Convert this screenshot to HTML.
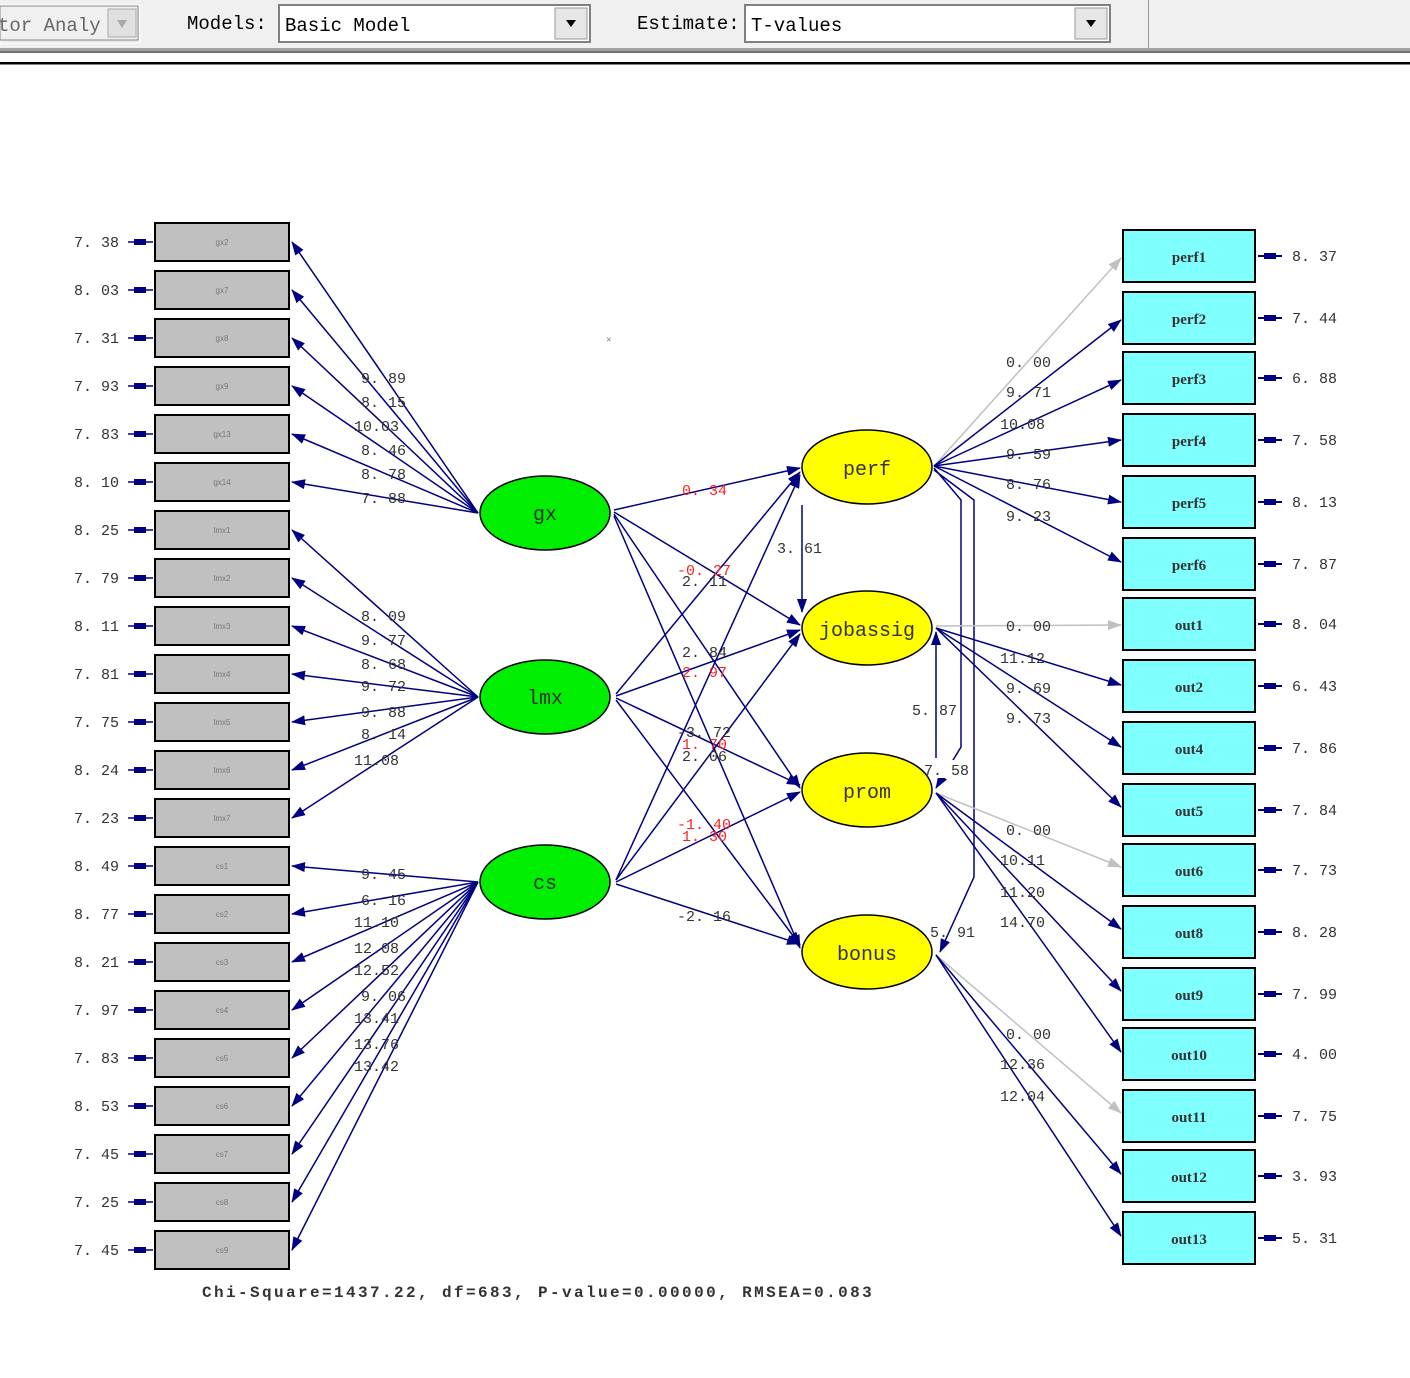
<!DOCTYPE html>
<html><head><meta charset="utf-8"><style>
html,body{margin:0;padding:0;background:#fff;width:1410px;height:1378px;overflow:hidden}
svg{display:block}
.n{font-family:"Liberation Mono",monospace;font-size:15px;fill:#333}
.r{fill:#ff2020}
.bx{fill:#c0c0c0;stroke:#000;stroke-width:2}
.cb{fill:#80ffff;stroke:#000;stroke-width:2}
.bl{font-family:"Liberation Sans",sans-serif;font-size:8px;fill:#777;text-anchor:middle}
.cl{font-family:"Liberation Serif",serif;font-size:15px;font-weight:bold;fill:#333;text-anchor:middle}
.ln{stroke:#000080;stroke-width:1.5;fill:none}
.gl{stroke:#c0c0c0;stroke-width:1.5;fill:none}
.tb{font-family:"Liberation Mono",monospace;font-size:19px;fill:#000}
</style></head><body>
<svg width="1410" height="1378" xmlns="http://www.w3.org/2000/svg">
<defs>
<marker id="a" markerWidth="14" markerHeight="10" refX="13" refY="5" orient="auto" markerUnits="userSpaceOnUse"><path d="M0,0 L14,5 L0,10 z" fill="#000080"/></marker>
<marker id="g" markerWidth="14" markerHeight="10" refX="13" refY="5" orient="auto" markerUnits="userSpaceOnUse"><path d="M0,0 L14,5 L0,10 z" fill="#c0c0c0"/></marker>
</defs>
<rect x="0" y="0" width="1410" height="48" fill="#f0f0f0"/>
<rect x="0" y="48" width="1410" height="3" fill="#a0a0a0"/>
<rect x="0" y="51" width="1410" height="2" fill="#707070"/>
<rect x="0" y="62" width="1410" height="2.5" fill="#000"/>
<line x1="1148.5" y1="0" x2="1148.5" y2="48" stroke="#999"/>
<rect x="0" y="5" width="140" height="38" fill="#e8e8e8" stroke="#fff"/>
<rect x="0" y="6" width="138" height="34" fill="#f0f0f0" stroke="#888"/>
<text x="-2" y="31" class="tb" style="fill:#666">tor Analy</text>
<rect x="108" y="9" width="28" height="28" fill="#e0e0e0" stroke="#aaa"/>
<path d="M117,20 L127,20 L122,28 z" fill="#aaa"/>
<text x="187" y="29" class="tb">Models:</text>
<rect x="279" y="5" width="311" height="37" fill="#fff" stroke="#808080" stroke-width="2"/>
<text x="285" y="31" class="tb">Basic Model</text>
<rect x="555" y="8" width="32" height="31" fill="#e6e6e6" stroke="#999"/>
<path d="M566,20 L576,20 L571,27 z" fill="#000"/>
<text x="637" y="29" class="tb">Estimate:</text>
<rect x="745" y="5" width="365" height="37" fill="#fff" stroke="#808080" stroke-width="2"/>
<text x="751" y="31" class="tb">T-values</text>
<rect x="1075" y="8" width="32" height="31" fill="#e6e6e6" stroke="#999"/>
<path d="M1086,20 L1096,20 L1091,27 z" fill="#000"/>
<text x="606" y="343" font-size="10" fill="#555">×</text>

<g class="ln">
<line x1="478" y1="513" x2="292" y2="242" marker-end="url(#a)"/>
<line x1="478" y1="513" x2="292" y2="290" marker-end="url(#a)"/>
<line x1="478" y1="513" x2="292" y2="338" marker-end="url(#a)"/>
<line x1="478" y1="513" x2="292" y2="386" marker-end="url(#a)"/>
<line x1="478" y1="513" x2="292" y2="434" marker-end="url(#a)"/>
<line x1="478" y1="513" x2="292" y2="482" marker-end="url(#a)"/>
<line x1="478" y1="697" x2="292" y2="530" marker-end="url(#a)"/>
<line x1="478" y1="697" x2="292" y2="578" marker-end="url(#a)"/>
<line x1="478" y1="697" x2="292" y2="626" marker-end="url(#a)"/>
<line x1="478" y1="697" x2="292" y2="674" marker-end="url(#a)"/>
<line x1="478" y1="697" x2="292" y2="722" marker-end="url(#a)"/>
<line x1="478" y1="697" x2="292" y2="770" marker-end="url(#a)"/>
<line x1="478" y1="697" x2="292" y2="818" marker-end="url(#a)"/>
<line x1="478" y1="882" x2="292" y2="866" marker-end="url(#a)"/>
<line x1="478" y1="882" x2="292" y2="914" marker-end="url(#a)"/>
<line x1="478" y1="882" x2="292" y2="962" marker-end="url(#a)"/>
<line x1="478" y1="882" x2="292" y2="1010" marker-end="url(#a)"/>
<line x1="478" y1="882" x2="292" y2="1058" marker-end="url(#a)"/>
<line x1="478" y1="882" x2="292" y2="1106" marker-end="url(#a)"/>
<line x1="478" y1="882" x2="292" y2="1154" marker-end="url(#a)"/>
<line x1="478" y1="882" x2="292" y2="1202" marker-end="url(#a)"/>
<line x1="478" y1="882" x2="292" y2="1250" marker-end="url(#a)"/>
</g>
<g class="ln">
<line x1="128" y1="242" x2="153" y2="242"/><line x1="128" y1="290" x2="153" y2="290"/><line x1="128" y1="338" x2="153" y2="338"/><line x1="128" y1="386" x2="153" y2="386"/><line x1="128" y1="434" x2="153" y2="434"/><line x1="128" y1="482" x2="153" y2="482"/><line x1="128" y1="530" x2="153" y2="530"/><line x1="128" y1="578" x2="153" y2="578"/><line x1="128" y1="626" x2="153" y2="626"/><line x1="128" y1="674" x2="153" y2="674"/><line x1="128" y1="722" x2="153" y2="722"/><line x1="128" y1="770" x2="153" y2="770"/><line x1="128" y1="818" x2="153" y2="818"/><line x1="128" y1="866" x2="153" y2="866"/><line x1="128" y1="914" x2="153" y2="914"/><line x1="128" y1="962" x2="153" y2="962"/><line x1="128" y1="1010" x2="153" y2="1010"/><line x1="128" y1="1058" x2="153" y2="1058"/><line x1="128" y1="1106" x2="153" y2="1106"/><line x1="128" y1="1154" x2="153" y2="1154"/><line x1="128" y1="1202" x2="153" y2="1202"/><line x1="128" y1="1250" x2="153" y2="1250"/>
</g>
<g fill="#000080">
<rect x="134" y="239" width="12" height="6"/><rect x="134" y="287" width="12" height="6"/><rect x="134" y="335" width="12" height="6"/><rect x="134" y="383" width="12" height="6"/><rect x="134" y="431" width="12" height="6"/><rect x="134" y="479" width="12" height="6"/><rect x="134" y="527" width="12" height="6"/><rect x="134" y="575" width="12" height="6"/><rect x="134" y="623" width="12" height="6"/><rect x="134" y="671" width="12" height="6"/><rect x="134" y="719" width="12" height="6"/><rect x="134" y="767" width="12" height="6"/><rect x="134" y="815" width="12" height="6"/><rect x="134" y="863" width="12" height="6"/><rect x="134" y="911" width="12" height="6"/><rect x="134" y="959" width="12" height="6"/><rect x="134" y="1007" width="12" height="6"/><rect x="134" y="1055" width="12" height="6"/><rect x="134" y="1103" width="12" height="6"/><rect x="134" y="1151" width="12" height="6"/><rect x="134" y="1199" width="12" height="6"/><rect x="134" y="1247" width="12" height="6"/>
</g>
<g class="n">
<text x="74" y="247">7. 38</text><text x="74" y="295">8. 03</text><text x="74" y="343">7. 31</text><text x="74" y="391">7. 93</text><text x="74" y="439">7. 83</text><text x="74" y="487">8. 10</text><text x="74" y="535">8. 25</text><text x="74" y="583">7. 79</text><text x="74" y="631">8. 11</text><text x="74" y="679">7. 81</text><text x="74" y="727">7. 75</text><text x="74" y="775">8. 24</text><text x="74" y="823">7. 23</text><text x="74" y="871">8. 49</text><text x="74" y="919">8. 77</text><text x="74" y="967">8. 21</text><text x="74" y="1015">7. 97</text><text x="74" y="1063">7. 83</text><text x="74" y="1111">8. 53</text><text x="74" y="1159">7. 45</text><text x="74" y="1207">7. 25</text><text x="74" y="1255">7. 45</text>
</g>
<g>
<rect class="bx" x="155" y="223" width="134" height="38"/><rect class="bx" x="155" y="271" width="134" height="38"/><rect class="bx" x="155" y="319" width="134" height="38"/><rect class="bx" x="155" y="367" width="134" height="38"/><rect class="bx" x="155" y="415" width="134" height="38"/><rect class="bx" x="155" y="463" width="134" height="38"/><rect class="bx" x="155" y="511" width="134" height="38"/><rect class="bx" x="155" y="559" width="134" height="38"/><rect class="bx" x="155" y="607" width="134" height="38"/><rect class="bx" x="155" y="655" width="134" height="38"/><rect class="bx" x="155" y="703" width="134" height="38"/><rect class="bx" x="155" y="751" width="134" height="38"/><rect class="bx" x="155" y="799" width="134" height="38"/><rect class="bx" x="155" y="847" width="134" height="38"/><rect class="bx" x="155" y="895" width="134" height="38"/><rect class="bx" x="155" y="943" width="134" height="38"/><rect class="bx" x="155" y="991" width="134" height="38"/><rect class="bx" x="155" y="1039" width="134" height="38"/><rect class="bx" x="155" y="1087" width="134" height="38"/><rect class="bx" x="155" y="1135" width="134" height="38"/><rect class="bx" x="155" y="1183" width="134" height="38"/><rect class="bx" x="155" y="1231" width="134" height="38"/>
</g>
<g class="bl">
<text x="222" y="245">gx2</text><text x="222" y="293">gx7</text><text x="222" y="341">gx8</text><text x="222" y="389">gx9</text><text x="222" y="437">gx13</text><text x="222" y="485">gx14</text><text x="222" y="533">lmx1</text><text x="222" y="581">lmx2</text><text x="222" y="629">lmx3</text><text x="222" y="677">lmx4</text><text x="222" y="725">lmx5</text><text x="222" y="773">lmx6</text><text x="222" y="821">lmx7</text><text x="222" y="869">cs1</text><text x="222" y="917">cs2</text><text x="222" y="965">cs3</text><text x="222" y="1013">cs4</text><text x="222" y="1061">cs5</text><text x="222" y="1109">cs6</text><text x="222" y="1157">cs7</text><text x="222" y="1205">cs8</text><text x="222" y="1253">cs9</text>
</g>
<g class="n">
<text x="361" y="383">9. 89</text><text x="361" y="407">8. 15</text><text x="354" y="431">10.03</text><text x="361" y="455">8. 46</text><text x="361" y="479">8. 78</text><text x="361" y="503">7. 88</text>
<text x="361" y="621">8. 09</text><text x="361" y="645">9. 77</text><text x="361" y="669">8. 68</text><text x="361" y="691">9. 72</text><text x="361" y="717">9. 88</text><text x="361" y="739">8. 14</text><text x="354" y="765">11.08</text>
<text x="361" y="879">9. 45</text><text x="361" y="905">6. 16</text><text x="354" y="927">11.10</text><text x="354" y="953">12.08</text><text x="354" y="975">12.52</text><text x="361" y="1001">9. 06</text><text x="354" y="1023">13.41</text><text x="354" y="1049">13.76</text><text x="354" y="1071">13.42</text>
</g>

<g class="ln">
<line x1="614" y1="510" x2="800" y2="468" marker-end="url(#a)"/>
<line x1="614" y1="512" x2="800" y2="625" marker-end="url(#a)"/>
<line x1="614" y1="514" x2="800" y2="788" marker-end="url(#a)"/>
<line x1="614" y1="516" x2="800" y2="948" marker-end="url(#a)"/>
<line x1="616" y1="694" x2="800" y2="472" marker-end="url(#a)"/>
<line x1="616" y1="696" x2="800" y2="630" marker-end="url(#a)"/>
<line x1="616" y1="698" x2="800" y2="785" marker-end="url(#a)"/>
<line x1="616" y1="700" x2="800" y2="945" marker-end="url(#a)"/>
<line x1="616" y1="880" x2="800" y2="475" marker-end="url(#a)"/>
<line x1="616" y1="880" x2="800" y2="634" marker-end="url(#a)"/>
<line x1="616" y1="882" x2="800" y2="792" marker-end="url(#a)"/>
<line x1="616" y1="884" x2="800" y2="944" marker-end="url(#a)"/>
<line x1="802" y1="505" x2="802" y2="612" marker-end="url(#a)"/>
<line x1="936" y1="758" x2="936" y2="632" marker-end="url(#a)"/>
<polyline points="934,468 961,500 961,747 936,788" marker-end="url(#a)"/>
<polyline points="934,470 974,500 974,877 940,952" marker-end="url(#a)"/>
</g>
<g class="n">
<text x="682" y="495" class="n r">0. 34</text>
<text x="682" y="586">2. 11</text>
<text x="677" y="575" class="n r">-0. 27</text>
<text x="682" y="677" class="n r">2. 97</text>
<text x="682" y="657">2. 84</text>
<text x="682" y="749" class="n r">1. 70</text>
<text x="682" y="761">2. 06</text>
<text x="677" y="737">-3. 72</text>
<text x="682" y="841" class="n r">1. 30</text>
<text x="677" y="829" class="n r">-1. 40</text>
<text x="677" y="921">-2. 16</text>
<text x="777" y="553">3. 61</text>
<text x="912" y="715">5. 87</text>
<rect x="920" y="760" width="50" height="18" fill="#fff"/>
<text x="924" y="775">7. 58</text>
<text x="930" y="937">5. 91</text>
</g>

<g>
<line class="gl" x1="934" y1="466" x2="1121" y2="258" marker-end="url(#g)"/>
<line class="ln" x1="934" y1="466" x2="1121" y2="320" marker-end="url(#a)"/>
<line class="ln" x1="934" y1="466" x2="1121" y2="380" marker-end="url(#a)"/>
<line class="ln" x1="934" y1="466" x2="1121" y2="440" marker-end="url(#a)"/>
<line class="ln" x1="934" y1="466" x2="1121" y2="502" marker-end="url(#a)"/>
<line class="ln" x1="934" y1="466" x2="1121" y2="562" marker-end="url(#a)"/>
<line class="gl" x1="936" y1="626" x2="1121" y2="625" marker-end="url(#g)"/>
<line class="ln" x1="936" y1="628" x2="1121" y2="685" marker-end="url(#a)"/>
<line class="ln" x1="936" y1="628" x2="1121" y2="747" marker-end="url(#a)"/>
<line class="ln" x1="936" y1="628" x2="1121" y2="807" marker-end="url(#a)"/>
<line class="gl" x1="936" y1="793" x2="1121" y2="867" marker-end="url(#g)"/>
<line class="ln" x1="936" y1="793" x2="1121" y2="929" marker-end="url(#a)"/>
<line class="ln" x1="936" y1="793" x2="1121" y2="991" marker-end="url(#a)"/>
<line class="ln" x1="936" y1="793" x2="1121" y2="1052" marker-end="url(#a)"/>
<line class="gl" x1="936" y1="955" x2="1121" y2="1113" marker-end="url(#g)"/>
<line class="ln" x1="936" y1="955" x2="1121" y2="1174" marker-end="url(#a)"/>
<line class="ln" x1="936" y1="955" x2="1121" y2="1236" marker-end="url(#a)"/>
</g>
<g class="n">
<text x="1006" y="367">0. 00</text><text x="1006" y="397">9. 71</text><text x="1000" y="429">10.08</text><text x="1006" y="459">9. 59</text><text x="1006" y="489">8. 76</text><text x="1006" y="521">9. 23</text>
<text x="1006" y="631">0. 00</text><text x="1000" y="663">11.12</text><text x="1006" y="693">9. 69</text><text x="1006" y="723">9. 73</text>
<text x="1006" y="835">0. 00</text><text x="1000" y="865">10.11</text><text x="1000" y="897">11.20</text><text x="1000" y="927">14.70</text>
<text x="1006" y="1039">0. 00</text><text x="1000" y="1069">12.36</text><text x="1000" y="1101">12.04</text>
</g>

<g stroke="#000" stroke-width="1.5">
<ellipse cx="545" cy="513" rx="65" ry="37" fill="#00ee00"/>
<ellipse cx="545" cy="697" rx="65" ry="37" fill="#00ee00"/>
<ellipse cx="545" cy="882" rx="65" ry="37" fill="#00ee00"/>
<ellipse cx="867" cy="467" rx="65" ry="37" fill="#ffff00"/>
<ellipse cx="867" cy="628" rx="65" ry="37" fill="#ffff00"/>
<ellipse cx="867" cy="790" rx="65" ry="37" fill="#ffff00"/>
<ellipse cx="867" cy="952" rx="65" ry="37" fill="#ffff00"/>
</g>
<g font-family="Liberation Mono,monospace" font-size="20" fill="#333" text-anchor="middle">
<text x="545" y="520">gx</text><text x="545" y="704">lmx</text><text x="545" y="889">cs</text>
<text x="867" y="475">perf</text><text x="867" y="636">jobassig</text><text x="867" y="798">prom</text><text x="867" y="960">bonus</text>
</g>

<g>
<rect class="cb" x="1123" y="230" width="132" height="52"/><rect class="cb" x="1123" y="292" width="132" height="52"/><rect class="cb" x="1123" y="352" width="132" height="52"/><rect class="cb" x="1123" y="414" width="132" height="52"/><rect class="cb" x="1123" y="476" width="132" height="52"/><rect class="cb" x="1123" y="538" width="132" height="52"/><rect class="cb" x="1123" y="598" width="132" height="52"/><rect class="cb" x="1123" y="660" width="132" height="52"/><rect class="cb" x="1123" y="722" width="132" height="52"/><rect class="cb" x="1123" y="784" width="132" height="52"/><rect class="cb" x="1123" y="844" width="132" height="52"/><rect class="cb" x="1123" y="906" width="132" height="52"/><rect class="cb" x="1123" y="968" width="132" height="52"/><rect class="cb" x="1123" y="1028" width="132" height="52"/><rect class="cb" x="1123" y="1090" width="132" height="52"/><rect class="cb" x="1123" y="1150" width="132" height="52"/><rect class="cb" x="1123" y="1212" width="132" height="52"/>
</g>
<g class="cl">
<text x="1189" y="262">perf1</text><text x="1189" y="324">perf2</text><text x="1189" y="384">perf3</text><text x="1189" y="446">perf4</text><text x="1189" y="508">perf5</text><text x="1189" y="570">perf6</text><text x="1189" y="630">out1</text><text x="1189" y="692">out2</text><text x="1189" y="754">out4</text><text x="1189" y="816">out5</text><text x="1189" y="876">out6</text><text x="1189" y="938">out8</text><text x="1189" y="1000">out9</text><text x="1189" y="1060">out10</text><text x="1189" y="1122">out11</text><text x="1189" y="1182">out12</text><text x="1189" y="1244">out13</text>
</g>
<g fill="#000080">
<rect x="1258" y="255" width="24" height="2"/><rect x="1264" y="253" width="12" height="6"/>
<rect x="1258" y="317" width="24" height="2"/><rect x="1264" y="315" width="12" height="6"/>
<rect x="1258" y="377" width="24" height="2"/><rect x="1264" y="375" width="12" height="6"/>
<rect x="1258" y="439" width="24" height="2"/><rect x="1264" y="437" width="12" height="6"/>
<rect x="1258" y="501" width="24" height="2"/><rect x="1264" y="499" width="12" height="6"/>
<rect x="1258" y="563" width="24" height="2"/><rect x="1264" y="561" width="12" height="6"/>
<rect x="1258" y="623" width="24" height="2"/><rect x="1264" y="621" width="12" height="6"/>
<rect x="1258" y="685" width="24" height="2"/><rect x="1264" y="683" width="12" height="6"/>
<rect x="1258" y="747" width="24" height="2"/><rect x="1264" y="745" width="12" height="6"/>
<rect x="1258" y="809" width="24" height="2"/><rect x="1264" y="807" width="12" height="6"/>
<rect x="1258" y="869" width="24" height="2"/><rect x="1264" y="867" width="12" height="6"/>
<rect x="1258" y="931" width="24" height="2"/><rect x="1264" y="929" width="12" height="6"/>
<rect x="1258" y="993" width="24" height="2"/><rect x="1264" y="991" width="12" height="6"/>
<rect x="1258" y="1053" width="24" height="2"/><rect x="1264" y="1051" width="12" height="6"/>
<rect x="1258" y="1115" width="24" height="2"/><rect x="1264" y="1113" width="12" height="6"/>
<rect x="1258" y="1175" width="24" height="2"/><rect x="1264" y="1173" width="12" height="6"/>
<rect x="1258" y="1237" width="24" height="2"/><rect x="1264" y="1235" width="12" height="6"/>
</g>
<g class="n">
<text x="1292" y="261">8. 37</text><text x="1292" y="323">7. 44</text><text x="1292" y="383">6. 88</text><text x="1292" y="445">7. 58</text><text x="1292" y="507">8. 13</text><text x="1292" y="569">7. 87</text><text x="1292" y="629">8. 04</text><text x="1292" y="691">6. 43</text><text x="1292" y="753">7. 86</text><text x="1292" y="815">7. 84</text><text x="1292" y="875">7. 73</text><text x="1292" y="937">8. 28</text><text x="1292" y="999">7. 99</text><text x="1292" y="1059">4. 00</text><text x="1292" y="1121">7. 75</text><text x="1292" y="1181">3. 93</text><text x="1292" y="1243">5. 31</text>
</g>
<text x="202" y="1297" font-family="Liberation Mono,monospace" font-size="16" fill="#333" font-weight="bold" letter-spacing="2.4">Chi-Square=1437.22, df=683, P-value=0.00000, RMSEA=0.083</text>
</svg>
</body></html>
